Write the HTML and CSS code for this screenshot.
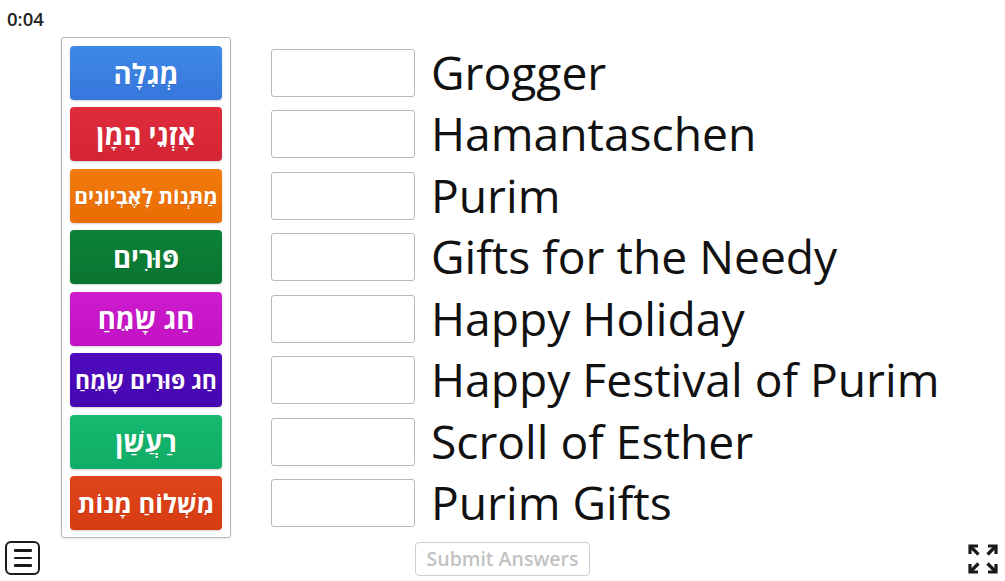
FILE: index.html
```html
<!DOCTYPE html>
<html lang="en">
<head>
<meta charset="utf-8">
<title>Purim Match</title>
<link rel="stylesheet" href="styles.css">
</head>
<body>
<div class="page">
  <div class="timer">0:04</div>
  <div class="main">
    <div class="bank">
      <div class="tile t-blue" dir="rtl">מְגִלָּה</div>
      <div class="tile t-red" dir="rtl">אָזְנֵי הָמָן</div>
      <div class="tile t-orange small" dir="rtl">מַתְּנוֹת לָאֶבְיוֹנִים</div>
      <div class="tile t-green" dir="rtl">פּוּרִים</div>
      <div class="tile t-magenta" dir="rtl">חַג שָׂמֵחַ</div>
      <div class="tile t-purple small2" dir="rtl">חַג פּוּרִים שָׂמֵחַ</div>
      <div class="tile t-teal" dir="rtl">רַעֲשַׁן</div>
      <div class="tile t-rust mid" dir="rtl">מִשְׁלוֹחַ מָנוֹת</div>
    </div>
    <div class="rows">
      <div class="row"><div class="slot"></div><div class="label">Grogger</div></div>
      <div class="row"><div class="slot"></div><div class="label">Hamantaschen</div></div>
      <div class="row"><div class="slot"></div><div class="label">Purim</div></div>
      <div class="row"><div class="slot"></div><div class="label">Gifts for the Needy</div></div>
      <div class="row"><div class="slot"></div><div class="label">Happy Holiday</div></div>
      <div class="row"><div class="slot"></div><div class="label">Happy Festival of Purim</div></div>
      <div class="row"><div class="slot"></div><div class="label">Scroll of Esther</div></div>
      <div class="row"><div class="slot"></div><div class="label">Purim Gifts</div></div>
    </div>
  </div>
  <div class="footer">
    <div class="menu-btn" aria-label="Menu">
      <span class="bar"></span><span class="bar"></span><span class="bar"></span>
    </div>
    <button class="submit" type="button">Submit Answers</button>
    <div class="fs">
      <svg width="32" height="32" viewBox="0 0 32 32" aria-label="Fullscreen">
        <g fill="none" stroke="#1a1a1a" stroke-width="3.2" stroke-linecap="butt" stroke-linejoin="miter">
          <path d="M3 11 V3 H11"/><path d="M3 3 L11.5 11.5"/>
          <path d="M21 3 H29 V11"/><path d="M29 3 L20.5 11.5"/>
          <path d="M3 21 V29 H11"/><path d="M3 29 L11.5 20.5"/>
          <path d="M21 29 H29 V21"/><path d="M29 29 L20.5 20.5"/>
        </g>
      </svg>
    </div>
  </div>
</div>
</body>
</html>
```
FILE: styles.css
```css
html, body {
  margin: 0;
  padding: 0;
  background: #ffffff;
}
body {
  font-family: "Open Sans", "Liberation Sans", sans-serif;
  color: #111;
  width: 1005px;
  height: 581px;
  overflow: hidden;
}
.page {
  display: flex;
  flex-direction: column;
  height: 581px;
}
.timer {
  height: 37px;
  box-sizing: border-box;
  padding: 7px 0 0 7px;
  font-size: 18.5px;
  font-weight: 600;
  line-height: 24px;
  color: #222;
}
.main {
  display: flex;
  padding-left: 61px;
}
.bank {
  width: 152px;
  border: 1px solid #b5b5b5;
  border-radius: 3px;
  padding: 8px 8px 7px 8px;
  display: flex;
  flex-direction: column;
  gap: 7.43px;
  box-shadow: 0 1px 2px rgba(0,0,0,0.08);
}
.tile {
  height: 54px;
  border-radius: 4px;
  display: flex;
  align-items: center;
  justify-content: center;
  color: #fff;
  font-family: "Open Sans", "Noto Sans Hebrew", "DejaVu Sans", sans-serif;
  font-weight: 700;
  font-size: 27.5px;
  white-space: nowrap;
  box-shadow: 0 1px 2px rgba(0,0,0,0.18);
  text-shadow: 0 1px 1px rgba(0,0,0,0.12);
}
.tile.small { font-size: 21px; }
.tile.small2 { font-size: 23px; }
.tile.mid { font-size: 25.5px; }
.t-blue { background: linear-gradient(#3e8ae8, #3676dc); }
.t-red { background: linear-gradient(#e02c3d, #d42535); }
.t-orange { background: linear-gradient(#f27b0c, #ea6c04); }
.t-green { background: linear-gradient(#0c8239, #0a7530); }
.t-magenta { background: linear-gradient(#cd1ccd, #c212c4); }
.t-purple { background: linear-gradient(#500cbc, #4606b2); }
.t-teal { background: linear-gradient(#17b870, #10ad66); }
.t-rust { background: linear-gradient(#e0441a, #d63b12); }
.rows {
  margin-left: 40px;
  padding-top: 12px;
  display: flex;
  flex-direction: column;
  gap: 13.43px;
}
.row {
  display: flex;
  align-items: center;
  height: 48px;
}
.slot {
  width: 142px;
  height: 46px;
  border: 1px solid #b8b8b8;
  border-radius: 3px;
  background: #fff;
}
.label {
  margin-left: 16px;
  font-size: 46.2px;
  line-height: 48px;
  color: #111;
  white-space: nowrap;
}
.footer {
  display: grid;
  grid-template-columns: 1fr auto 1fr;
  align-items: start;
  padding-top: 3px;
}
.menu-btn {
  justify-self: start;
  margin-left: 5px;
  width: 31px;
  height: 30px;
  border: 2px solid #1a1a1a;
  border-radius: 6px;
  display: flex;
  flex-direction: column;
  justify-content: center;
  align-items: center;
  gap: 5px;
}
.bar {
  width: 18px;
  height: 2.6px;
  background: #1a1a1a;
  border-radius: 1px;
}
.submit {
  width: 175px;
  height: 34px;
  margin-top: 1px;
  border: 1px solid #cfcfcf;
  border-radius: 4px;
  background: #fff;
  color: #c2c2c2;
  font-family: "Open Sans", "Liberation Sans", sans-serif;
  font-size: 19.5px;
  font-weight: 600;
  padding: 0;
}
.fs {
  justify-self: end;
  margin-right: 6px;
  margin-top: 2px;
  width: 32px;
  height: 32px;
}
.fs svg { display: block; }
```
